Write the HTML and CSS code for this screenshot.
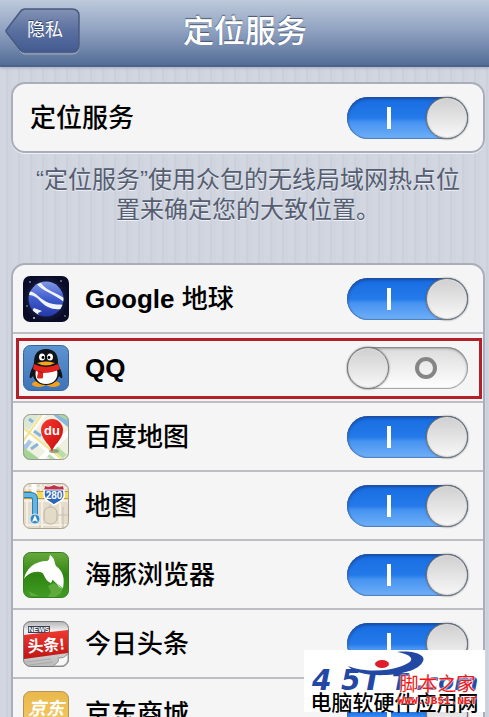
FILE: index.html
```html
<!DOCTYPE html>
<html lang="zh-CN">
<head>
  <meta charset="UTF-8">
  <meta name="viewport" content="width=device-width, initial-scale=1">
  <title>定位服务</title>
  <link rel="stylesheet" href="styles.css">
</head>
<body>
  <header class="navbar">
    <a class="back" href="#">
      <svg class="back-shape" viewBox="0 0 76 47" aria-hidden="true">
        <defs>
          <linearGradient id="backFill" x1="0" y1="0" x2="0" y2="1">
            <stop offset="0" stop-color="#8292b4"/>
            <stop offset=".5" stop-color="#5b70a0"/>
            <stop offset="1" stop-color="#435b91"/>
          </linearGradient>
        </defs>
        <path d="M20 2H67Q74 2 74 9V39Q74 46 67 46H20Q17 46 15 43L2 26Q0 24 2 22L15 5Q17 2 20 2Z" fill="none" stroke="#a3b0c8" stroke-width="1"/>
        <path d="M20 1H67Q74 1 74 8V37Q74 44 67 44H20Q17 44 15 42L2 25Q0 23 2 21L15 4Q17 1 20 1Z" fill="url(#backFill)" stroke="#495a7e" stroke-width="1.5"/>
      </svg>
      <span class="back-text">隐私</span>
    </a>
    <h1 class="title">定位服务</h1>
  </header>

  <main class="content">
    <section class="card">
      <label class="row row-main">
        <span class="name">定位服务</span>
        <input class="switch" type="checkbox" role="switch" checked>
      </label>
    </section>

    <p class="hint">“定位服务”使用众包的无线局域网热点位置来确定您的大致位置。</p>

    <section class="card">
      <!-- Google Earth -->
      <label class="row">
        <svg class="icon" viewBox="0 0 46 46" aria-hidden="true">
          <defs>
            <radialGradient id="space"><stop offset="0" stop-color="#35406e"/><stop offset="1" stop-color="#090b27"/></radialGradient>
            <linearGradient id="globe" x1="0" y1="0" x2="0" y2="1"><stop offset="0" stop-color="#7f98e8"/><stop offset=".5" stop-color="#3f5ccc"/><stop offset="1" stop-color="#2438a6"/></linearGradient>
            <clipPath id="globeClip"><circle cx="23" cy="23" r="17.5"/></clipPath>
          </defs>
          <rect width="46" height="46" rx="7" fill="url(#space)"/>
          <circle cx="23" cy="23" r="17.5" fill="url(#globe)"/>
          <g clip-path="url(#globeClip)" fill="#f1f4ff">
            <path d="M14 8C19 15 30 17 41 26V22C32 16 24 15 18 7Z"/>
            <path d="M5 15C13 15 17 24 26 27C32 29 36 28 41 29L38 33C29 34 23 31 17 25C13 20 9 19 5 19Z"/>
            <path d="M11 32L19 35L15 37L16 41L8 36Z"/>
          </g>
          <g fill="#c6cce9"><circle cx="7" cy="6" r=".8"/><circle cx="38" cy="5" r=".8"/><circle cx="11" cy="42" r="1"/><circle cx="42" cy="40" r=".7"/><circle cx="4" cy="30" r=".7"/></g>
        </svg>
        <span class="name"><b>Google</b> 地球</span>
        <input class="switch" type="checkbox" role="switch" checked>
      </label>

      <!-- QQ -->
      <label class="row marked">
        <svg class="icon" viewBox="0 0 46 46" aria-hidden="true">
          <defs><linearGradient id="qqBg" x1="0" y1="0" x2="0" y2="1"><stop offset="0" stop-color="#5e93d1"/><stop offset="1" stop-color="#3e74b8"/></linearGradient></defs>
          <rect x=".5" y=".5" width="45" height="45" rx="7" fill="url(#qqBg)" stroke="#37649e"/>
          <ellipse cx="16" cy="39" rx="7" ry="3" fill="#f5a01c"/>
          <ellipse cx="30" cy="39" rx="7" ry="3" fill="#f5a01c"/>
          <path d="M23 4C15 4 11 9 11 17C11 21 8 24 7 29C6 33 7 35 10 31C12 37 17 40 23 40S34 37 36 31C39 35 40 33 39 29C38 24 35 21 35 17C35 9 31 4 23 4Z" fill="#101318"/>
          <path d="M13 25Q23 29 34 25C36 33 31 39 23 39S11 33 13 25Z" fill="#fff"/>
          <ellipse cx="19" cy="12" rx="3" ry="3.6" fill="#fff"/><ellipse cx="27" cy="12" rx="3" ry="3.6" fill="#fff"/>
          <circle cx="20" cy="12.5" r="1.4"/><circle cx="26" cy="12.5" r="1.4"/>
          <path d="M14 18Q23 15 32 18Q23 23 14 18Z" fill="#f7a61d"/>
          <path d="M11 19Q23 25 35 19L37 24Q30 28 20 28V33Q17 34 14 33L15 27L10 24Z" fill="#e3231d"/>
          <path d="M15 26L20 28" stroke="#9e1411"/>
        </svg>
        <span class="name"><b>QQ</b></span>
        <input class="switch" type="checkbox" role="switch">
      </label>

      <!-- Baidu Maps -->
      <label class="row">
        <svg class="icon" viewBox="0 0 46 46" aria-hidden="true">
          <defs>
            <clipPath id="tile"><rect width="46" height="46" rx="7"/></clipPath>
            <linearGradient id="pin" x1="0" y1="0" x2="1" y2="1"><stop offset="0" stop-color="#f7382d"/><stop offset="1" stop-color="#c70b0e"/></linearGradient>
          </defs>
          <g clip-path="url(#tile)">
            <path d="M0 0H46V46H0Z" fill="#eff0df"/>
            <path d="M0 0H20L10 18L0 12Z" fill="#dce7d6"/>
            <path d="M0 22L9 28L0 40Z" fill="#a6c6e6"/><path d="M0 33L18 46H0Z" fill="#a5d497"/>
            <path d="M29 0H46V14Z" fill="#87b9dd"/><path d="M33 0H46V7Z" fill="#b3d99f"/>
            <path d="M23 41L34 32L44 41L37 46H28Z" fill="#b9dda7"/>
            <path d="M0 29L22 -2M-2 15L38 46M17 46L46 18" stroke="#fff" stroke-width="5"/>
            <path d="M-1 29L22 -4M-1 13L40 46" stroke="#f3e38e" stroke-width="2"/>
            <path d="M6 5L10 8M11 17L18 22M8 35L15 30" stroke="#88b4d8" stroke-width="3"/>
          </g>
          <ellipse cx="31" cy="37" rx="5" ry="2" fill="#757a62" opacity=".6"/>
          <path d="M29 38C28 31 18 26 18 16A11 11 0 0 1 40 16C40 26 30 31 29 38Z" fill="url(#pin)"/>
          <text class="pin-text" x="29" y="21">du</text>
          <rect x=".5" y=".5" width="45" height="45" rx="7" fill="none" stroke="#949890"/>
        </svg>
        <span class="name">百度地图</span>
        <input class="switch" type="checkbox" role="switch" checked>
      </label>

      <!-- Maps -->
      <label class="row">
        <svg class="icon" viewBox="0 0 46 46" aria-hidden="true">
          <g clip-path="url(#tile)">
            <path d="M0 0H46V46H0Z" fill="#e5dccb"/>
            <path d="M0 18H46M19 18V46M4 0V46M37 20V46M0 42H46M18 0V10M0 5H46" stroke="#f4efe5" stroke-width="2"/>
            <path d="M0 12H46" stroke="#c59b35" stroke-width="8"/><path d="M0 12H46" stroke="#f8d85c" stroke-width="6"/>
            <rect x="21" y="24" width="13" height="17" rx="6" fill="#e3dac8" stroke="#bcb3a4"/>
            <path d="M40 24V46M27 19V24M17 42V46M34 32H46" stroke="#c8c0b2"/>
            <path d="M11 0V12" stroke="#fff" stroke-width="5"/>
            <path d="M0 12H8Q12 12 12 17V33" fill="none" stroke="#277fb4" stroke-width="6"/>
            <path d="M0 12H8Q12 12 12 17V33" fill="none" stroke="#64b5e0" stroke-width="4"/>
          </g>
          <circle cx="12" cy="36" r="5" fill="#368ac5" stroke="#d8efff"/>
          <path d="M12 32L15 39L12 37.5L9 39Z" fill="#fff"/>
          <path d="M22 3Q26 5 31 2Q36 5 40 3Q41 6 41 10C43 17 35 19 31 22C27 19 20 17 21 10Z" fill="#2e67b7" stroke="#fff" stroke-width="1.5"/>
          <path d="M22 3Q26 5 31 2Q36 5 40 3L41 7H21Z" fill="#bd334b"/>
          <path d="M21 7H41" stroke="#fff"/>
          <text class="road-text" x="31" y="16">280</text>
          <rect x=".5" y=".5" width="45" height="45" rx="7" fill="none" stroke="#aca38f"/>
        </svg>
        <span class="name">地图</span>
        <input class="switch" type="checkbox" role="switch" checked>
      </label>

      <!-- Dolphin browser -->
      <label class="row">
        <svg class="icon" viewBox="0 0 46 46" aria-hidden="true">
          <defs><linearGradient id="leaf" x1="0" y1="0" x2="0" y2="1"><stop offset="0" stop-color="#69a93d"/><stop offset=".5" stop-color="#2f8512"/><stop offset="1" stop-color="#409c23"/></linearGradient></defs>
          <rect x=".5" y=".5" width="45" height="45" rx="7" fill="url(#leaf)" stroke="#357f20"/>
          <path d="M25 34L31 31L36 35L40 36L38 41L32 45H25L28 40ZM5 39L16 44H8Z" fill="#6db34a" opacity=".7"/>
          <path d="M1 27C3 17 11 9 24 9C27 8 26 5 27 3C32 6 31 10 33 14C40 19 42 26 40 36L33 31C29 28 28 24 20 21C13 18 5 21 1 27Z" fill="#fff"/>
          <path d="M18 19L31 25L28 31C22 29 22 23 18 19Z" fill="#fff"/>
          <path d="M32 30L40 37L36 35Z" fill="#d7e8d0"/>
        </svg>
        <span class="name">海豚浏览器</span>
        <input class="switch" type="checkbox" role="switch" checked>
      </label>

      <!-- Toutiao -->
      <label class="row">
        <svg class="icon" viewBox="0 0 46 46" aria-hidden="true">
          <defs>
            <linearGradient id="paper" x1="0" y1="0" x2="0" y2="1"><stop offset="0" stop-color="#b4b4b4"/><stop offset=".2" stop-color="#eee"/><stop offset="1" stop-color="#bababa"/></linearGradient>
            <linearGradient id="red" x1="0" y1="0" x2="0" y2="1"><stop offset="0" stop-color="#ef3931"/><stop offset="1" stop-color="#be1514"/></linearGradient>
          </defs>
          <rect x=".5" y=".5" width="45" height="45" rx="7" fill="url(#paper)" stroke="#777"/>
          <path d="M5 5H27V12H5Z" fill="#374052"/>
          <text class="news-text" x="16" y="11">NEWS</text>
          <path d="M1 14L45 9V32L1 38Z" fill="url(#red)"/>
          <text class="headline-text" x="23" y="30" transform="rotate(-5 23 24)">头条!</text>
          <path d="M3 41L28 38M6 44L30 41" stroke="#aaa"/>
          <path d="M31 44Q37 41 35 37Q41 38 45 33V39Q43 45 38 45H31Z" fill="#f8f8f8" stroke="#999"/>
        </svg>
        <span class="name">今日头条</span>
        <input class="switch" type="checkbox" role="switch" checked>
      </label>

      <!-- JD -->
      <label class="row">
        <svg class="icon" viewBox="0 0 46 46" aria-hidden="true">
          <defs><linearGradient id="gold" x1="0" y1="0" x2="0" y2="1"><stop offset="0" stop-color="#e9b84b"/><stop offset="1" stop-color="#f6ce6b"/></linearGradient></defs>
          <rect x=".5" y=".5" width="45" height="45" rx="7" fill="url(#gold)" stroke="#b4935b"/>
          <text class="shop-text" x="23" y="24">京东</text>
        </svg>
        <span class="name">京东商城</span>
        <input class="switch" type="checkbox" role="switch" checked>
      </label>
    </section>
  </main>

  <!-- Site badge over the list -->
  <aside class="badge">
    <svg class="badge-logo" viewBox="0 0 181 46" aria-hidden="true">
      <text class="logo-text logo-digits" x="8" y="40">4</text>
      <text class="logo-text logo-digits" x="37" y="40">5</text>
      <text class="logo-text logo-stem" x="62" y="40">ı</text>
      <text class="logo-text logo-word" x="88" y="40">T</text>
      <text class="logo-text logo-word" x="112" y="40">.com</text>
      <path d="M44 16C58 22 82 22 98 16C112 11 110 5 93 2C112 0 124 6 118 13C112 22 90 26 70 25C56 24 47 20 44 16Z" fill="#2348a4"/>
      <ellipse cx="78" cy="14" rx="7" ry="4" fill="#df1d2b"/>
    </svg>
    <span class="badge-name">电脑软硬件应用网</span>
    <span class="stamp"><span class="stamp-name">脚本之家</span><span class="stamp-url">WWW.JB51.NET</span></span>
  </aside>
</body>
</html>
```
FILE: styles.css
```css
*,
*::before,
*::after {
  box-sizing: border-box;
}
body {
  margin: 0;
  height: 100vh;
  overflow: hidden;
  position: relative;
  font-family: "Liberation Sans", "Noto Sans CJK SC", sans-serif;
  color: #000;
  background: repeating-linear-gradient(90deg, #d2d6e0 0 6px, #cbd0db 6px 8px, #cfd4df 8px 12px);
}

/* --- Top bar --- */
.navbar {
  display: grid;
  grid-template-columns: 1fr auto 1fr;
  align-items: center;
  height: 67px;
  padding: 0 4px 2px 5px;
  background: linear-gradient(#bdcadb, #8d9fbf 50%, #536d96);
  border-bottom: 2px solid #4a648c;
  box-shadow: 0 1px 3px #a2a8b8;
}
.back {
  display: grid;
  width: 76px;
  height: 47px;
  color: #fff;
  text-decoration: none;
}
.back-shape,
.back-text {
  grid-area: 1 / 1;
}
.back-shape {
  width: 76px;
  height: 47px;
}
.back-text {
  padding-left: 4px;
  font-size: 18px;
  line-height: 45px;
  text-align: center;
  text-shadow: 0 -1px 0 #34466d;
}
.title {
  margin: 0;
  font-size: 31px;
  font-weight: 500;
  line-height: 46px;
  color: #fff;
  text-shadow: 0 -1px 1px #48566e;
}

/* --- Lists --- */
.content {
  padding: 15px 4px 0 11px;
}
.card {
  background: #f5f5f5;
  border: 2px solid #abaeba;
  border-radius: 14px;
  box-shadow: 0 1px 0 #edf0f5;
}
.row {
  display: flex;
  align-items: center;
  gap: 16px;
  height: 69px;
  padding: 0 15px 0 10px;
  border-bottom: 2px solid #bdbec2;
}
.row-main {
  height: 67px;
  padding-left: 17px;
  border-bottom: 0;
}
.row:last-child {
  border-bottom: 0;
}
.icon {
  flex: none;
  width: 46px;
  height: 46px;
}
.name {
  flex: 1;
  font-size: 26px;
  font-weight: 500;
  line-height: 36px;
}
.hint {
  margin: 12px 20px 38px;
  font-size: 24px;
  line-height: 30px;
  text-align: center;
  color: #555d70;
  text-shadow: 0 1px 0 #edf0f6;
}
.marked {
  position: relative;
}
.marked::after {
  content: "";
  position: absolute;
  inset: 4px 1px 2px 3px;
  border: 3px solid #b51f29;
}

/* --- Switch --- */
.switch {
  appearance: none;
  flex: none;
  display: flex;
  align-items: center;
  justify-content: space-between;
  width: 121px;
  height: 42px;
  margin: 0;
  border-radius: 21px;
  background: linear-gradient(#dadada, #eee 50%, #fff);
  box-shadow: inset 0 1px 3px #777, inset 0 0 1px 1px #aaa;
}
.switch::before {
  content: "";
  order: 2;
  width: 22px;
  height: 22px;
  margin-right: 31px;
  border: 4px solid #858585;
  border-radius: 50%;
}
.switch::after {
  content: "";
  order: 1;
  width: 42px;
  height: 42px;
  border: 1px solid #777;
  border-radius: 50%;
  background: linear-gradient(#cfcfcf, #f8f8f8);
  box-shadow: inset 0 0 1px 1px #ddd, 0 0 2px #555;
}
.switch:checked {
  background: linear-gradient(#176ce1, #247ae9 50%, #4693f1 60%, #70b0f7);
  box-shadow: inset 0 2px 3px #1748a0, inset 0 0 1px 1px #4e7fbd;
}
.switch:checked::before {
  order: 0;
  width: 4px;
  margin: 0 0 0 40px;
  border: 0;
  border-radius: 0;
  background: #fff;
}

/* --- Icon lettering --- */
.pin-text,
.road-text,
.news-text,
.headline-text,
.shop-text {
  fill: #fff;
  text-anchor: middle;
  font-weight: 700;
}
.pin-text { font-size: 13px; }
.road-text { font-size: 10px; }
.news-text { font-size: 7px; }
.headline-text { font-size: 16px; }
.shop-text {
  font-size: 18px;
  font-style: italic;
}

/* --- Badge --- */
.badge {
  position: absolute;
  right: 4px;
  bottom: 5px;
  display: grid;
  width: 181px;
  height: 62px;
  background: #fff;
}
.badge-logo {
  grid-area: 1 / 1;
  width: 181px;
  height: 46px;
}
.logo-text {
  fill: #2348a4;
  font-family: "DejaVu Sans", sans-serif;
  font-style: italic;
  font-weight: 700;
}
.logo-digits { font-size: 28px; }
.logo-stem { font-size: 32px; }
.logo-word { font-size: 23px; }
.badge-name {
  grid-area: 1 / 1;
  align-self: end;
  font-size: 21px;
  font-weight: 500;
  line-height: 19px;
  text-align: center;
  white-space: nowrap;
}
.stamp {
  grid-area: 1 / 1;
  align-self: end;
  justify-self: end;
  display: grid;
  padding: 0 8px 5px 0;
  color: #f01818;
  text-align: center;
}
.stamp-name {
  font-size: 19px;
  line-height: 20px;
  text-shadow: 0 0 2px #fff, 0 0 2px #fff;
}
.stamp-url {
  font-family: "Liberation Mono", monospace;
  font-size: 11px;
  font-weight: 700;
  line-height: 12px;
  text-shadow: 0 0 2px #fff, 0 0 2px #fff;
}
```
